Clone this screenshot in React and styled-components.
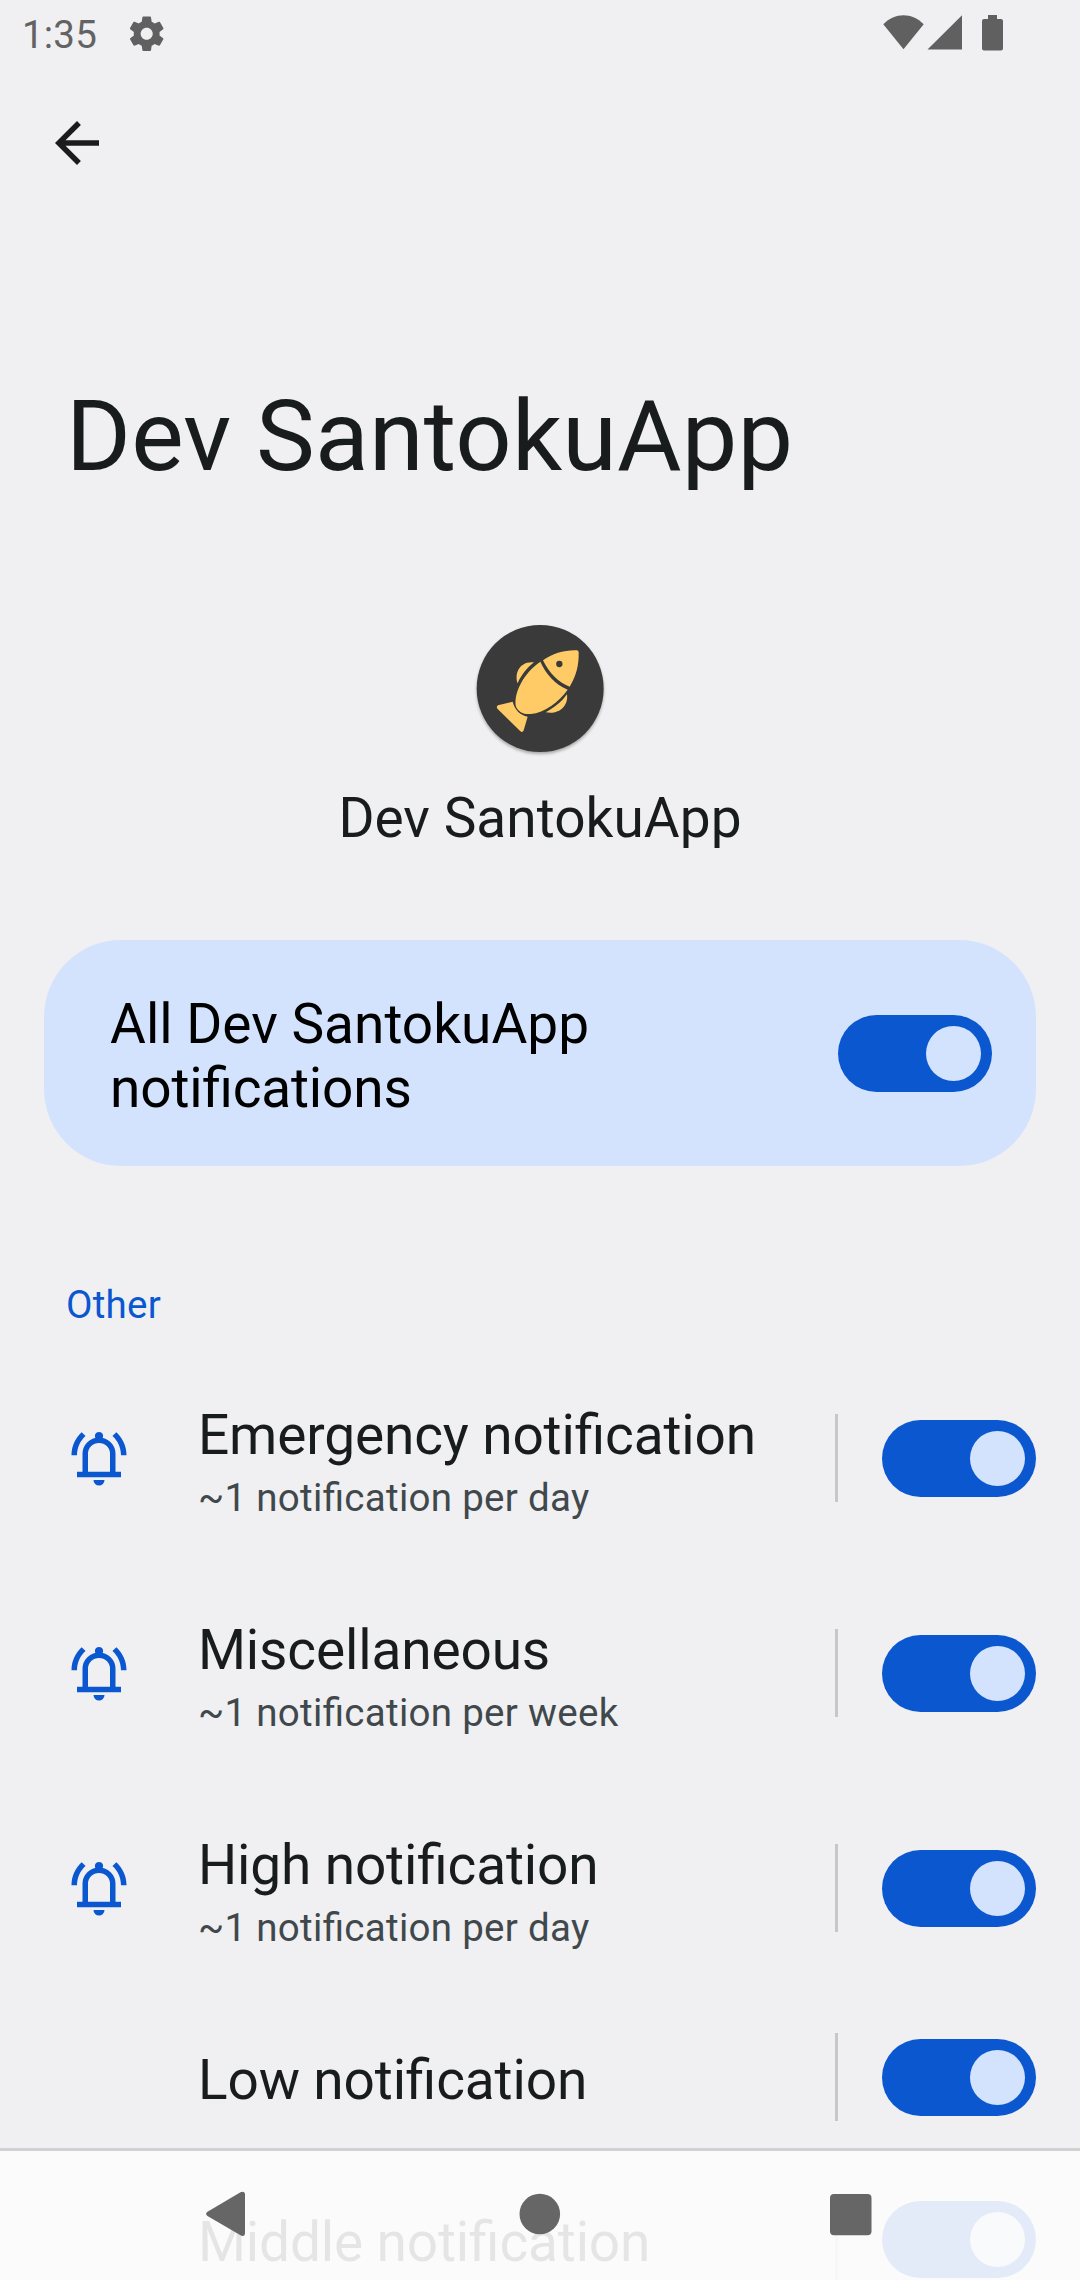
import React from "react";
import styled, { createGlobalStyle } from "styled-components";

const GlobalStyle = createGlobalStyle`
  * { box-sizing: border-box; }
  body {
    margin: 0;
    background: #f0f0f2;
    font-family: Roboto, "Noto Sans", sans-serif;
    font-feature-settings: "liga" 1;
    color: #191c1d;
  }
`;

const Screen = styled.div`
  position: relative;
  width: 1080px;
  height: 2280px;
  overflow: hidden;
  background: #f0f0f2;
  display: flex;
  flex-direction: column;
`;

const StatusBar = styled.header`
  display: flex;
  flex: none;
  align-items: center;
  justify-content: space-between;
  height: 66px;
  padding: 0 77px 0 22px;
  color: #606060;
`;

const StatusGroup = styled.div`
  display: flex;
  align-items: center;
`;

const Clock = styled.span`
  font-size: 38.5px;
  line-height: 46px;
  letter-spacing: 0.2px;
  color: #636363;
  width: 104px;
  padding-top: 3px;
`;

const Icon = styled.svg`
  display: block;
  flex: none;
  fill: currentColor;
  overflow: visible;
`;

const GearIcon = styled(Icon)`
  margin-top: 1px;
`;

const AppBar = styled.nav`
  flex: none;
  height: 154px;
  padding: 44px 44px 0;
`;

const BackButton = styled.button`
  display: block;
  border: 0;
  padding: 0;
  background: none;
  color: #1b1b1b;
`;

const PageTitle = styled.h1`
  flex: none;
  margin: 0;
  height: 405px;
  padding: 158px 66px 0;
  font-size: 99px;
  line-height: 116px;
  letter-spacing: 0.16px;
  font-weight: 400;
`;

const AppHeader = styled.section`
  flex: none;
  height: 315px;
  display: flex;
  flex-direction: column;
  align-items: center;
`;

const AppName = styled.div`
  margin-top: 33px;
  font-size: 55px;
  line-height: 64px;
  letter-spacing: 0.03px;
`;

const MainCard = styled.section`
  flex: none;
  display: flex;
  align-items: center;
  justify-content: space-between;
  height: 226px;
  margin: 0 44px;
  padding: 0 44px 0 66px;
  border-radius: 77px;
  background: #d3e3fd;
`;

const MainLabel = styled.div`
  width: 560px;
  padding-top: 6px;
  font-size: 55px;
  line-height: 64px;
  color: #000;
`;

const Tight = styled.span`
  letter-spacing: -0.18px;
`;

const SectionTitle = styled.h2`
  flex: none;
  margin: 0;
  height: 185px;
  padding: 116px 66px 0;
  font-size: 38.5px;
  line-height: 45px;
  letter-spacing: 0.25px;
  font-weight: 400;
  color: #0b57d0;
`;

const Row = styled.div`
  flex: none;
  display: flex;
  align-items: center;
  height: ${(p) => (p.$compact ? 162 : 215)}px;
  padding: ${(p) => (p.$compact ? 1 : 0)}px 44px 0 66px;
`;

const RowIcon = styled.div`
  width: 132px;
  margin-bottom: 1px;
  color: #0b57d0;
`;

const RowText = styled.div`
  flex: 1;
  padding-top: 5px;
`;

const RowTitle = styled.div`
  font-size: 55px;
  line-height: 64px;
  letter-spacing: -0.15px;
`;

const RowSummary = styled.div`
  margin-top: 8px;
  font-size: 38.5px;
  line-height: 45px;
  letter-spacing: 0.3px;
  color: #40484c;
`;

const Divider = styled.div`
  width: 3px;
  height: 88px;
  margin: 0 44px 1px 0;
  background: #c7c7c9;
`;

const Track = styled.div`
  flex: none;
  display: flex;
  justify-content: flex-end;
  width: 154px;
  height: 77px;
  padding: 11px;
  border-radius: 39px;
  background: #0b57d0;
`;

const Thumb = styled.div`
  width: 55px;
  height: 55px;
  border-radius: 50%;
  background: #d3e3fd;
`;

const NavBar = styled.footer`
  position: absolute;
  left: 0;
  right: 0;
  bottom: 0;
  height: 132px;
  border-top: 3px solid #d1d1d4;
  background: rgba(252, 252, 252, 0.9);
  background-clip: padding-box;
  color: #666;
  display: flex;
  justify-content: space-between;
  padding: 40px 208px 0 205px;
`;

function Switch() {
  return (
    <Track role="switch" aria-checked="true">
      <Thumb />
    </Track>
  );
}

function BellIcon() {
  return (
    <Icon width="66" height="66" viewBox="0 0 24 24">
      <circle cx="12" cy="4" r="1.5" />
      <path
        d="M7 18V10.5a5 5 0 0 1 10 0V18"
        fill="none"
        stroke="currentColor"
        strokeWidth="2"
      />
      <path d="M4 17h16v2H4zM10 20h4a2 2 0 0 1-4 0z" />
      <path d="M2 11h2c0-2.8 1.2-5.3 3.12-7L5.7 2.6C3.4 4.7 2 7.6 2 11zM22 11h-2c0-2.8-1.2-5.3-3.12-7L18.3 2.6C20.6 4.7 22 7.6 22 11z" />
    </Icon>
  );
}

const FishLogo = styled.svg`
  display: block;
  flex: none;
  overflow: visible;
  border-radius: 50%;
  filter: drop-shadow(0 2px 1.5px rgba(0, 0, 0, 0.3));
`;

function AppLogo() {
  return (
    <FishLogo width="128" height="128" viewBox="48 45 384 384">
      <circle cx="240.5" cy="235.5" r="190.5" fill="#3a3a3a" />
      <g fill="#ffcb66">
        <path d="M249 151C278 130 312 120 350 121Q356 121 356 127C357 166 348 200 329 230C295 217 267 189 249 151Z" />
        <path d="M241 155C258 193 286 223 323 239C297 276 254 308 212 312C190 314 175 305 168 290C160 250 190 190 241 155Z" />
        <path d="M222 157C200 175 184 194 173 220C162 188 181 152 222 157Z" />
        <path d="M321 253C306 274 282 294 257 307C295 315 326 290 321 253Z" />
        <path d="M158 275C164 299 180 315 203 320L191 361Q188 369 181 364L113 297C108 291 111 286 117 285Z" />
      </g>
      <circle cx="298" cy="162" r="9.5" fill="#3a3a3a" />
    </FishLogo>
  );
}

const channels = [
  { title: "Emergency notification", summary: "~1 notification per day" },
  { title: "Miscellaneous", summary: "~1 notification per week" },
  { title: "High notification", summary: "~1 notification per day" },
  { title: "Low notification" },
  { title: "Middle notification" },
];

function ChannelRow({ title, summary }) {
  return (
    <Row $compact={!summary}>
      <RowIcon>{summary && <BellIcon />}</RowIcon>
      <RowText>
        <RowTitle>{title}</RowTitle>
        {summary && <RowSummary>{summary}</RowSummary>}
      </RowText>
      <Divider />
      <Switch />
    </Row>
  );
}

export default function App() {
  return (
    <Screen>
      <GlobalStyle />
      <StatusBar>
        <StatusGroup>
          <Clock>1:35</Clock>
          <GearIcon width="41.4" height="41.4" viewBox="0 0 24 24">
            <path d="M19.43 12.98c.04-.32.07-.64.07-.98s-.03-.66-.07-.98l2.11-1.65c.19-.15.24-.42.12-.64l-2-3.46c-.12-.22-.39-.3-.61-.22l-2.49 1c-.52-.4-1.08-.73-1.69-.98l-.38-2.65C14.46 2.18 14.25 2 14 2h-4c-.25 0-.46.18-.49.42l-.38 2.65c-.61.25-1.17.59-1.69.98l-2.49-1c-.23-.09-.49 0-.61.22l-2 3.46c-.13.22-.07.49.12.64l2.11 1.65c-.04.32-.07.65-.07.98s.03.66.07.98l-2.11 1.65c-.19.15-.24.42-.12.64l2 3.46c.12.22.39.3.61.22l2.49-1c.52.4 1.08.73 1.69.98l.38 2.65c.03.24.24.42.49.42h4c.25 0 .46-.18.49-.42l.38-2.65c.61-.25 1.17-.59 1.69-.98l2.49 1c.23.09.49 0 .61-.22l2-3.46c.12-.22.07-.49-.12-.64l-2.11-1.65zM12 15.5c-1.93 0-3.5-1.57-3.5-3.5s1.57-3.5 3.5-3.5 3.5 1.57 3.5 3.5-1.57 3.5-3.5 3.5z" />
          </GearIcon>
        </StatusGroup>
        <StatusGroup>
          <Icon width="120" height="36" viewBox="0 0 120 36">
            <path d="M0.3 9.3C12-2.7 29-2.7 40.7 9.3L20.5 34.3Z" />
            <path d="M44.5 34.5L79 0.3V34.5Z" />
            <path d="M105 0h9v4h4q2 0 2 2v27.5q0 2-2 2h-17q-2 0-2-2V6q0-2 2-2h4z" />
          </Icon>
        </StatusGroup>
      </StatusBar>
      <AppBar>
        <BackButton aria-label="Navigate up">
          <Icon width="66" height="66" viewBox="0 0 24 24">
            <path d="M20 11H7.83l5.59-5.59L12 4l-8 8 8 8 1.41-1.41L7.83 13H20v-2z" />
          </Icon>
        </BackButton>
      </AppBar>
      <PageTitle>Dev SantokuApp</PageTitle>
      <AppHeader>
        <AppLogo />
        <AppName>Dev SantokuApp</AppName>
      </AppHeader>
      <MainCard>
        <MainLabel>
          All Dev SantokuApp <Tight>notifications</Tight>
        </MainLabel>
        <Switch />
      </MainCard>
      <SectionTitle>Other</SectionTitle>
      {channels.map((channel) => (
        <ChannelRow key={channel.title} {...channel} />
      ))}
      <NavBar>
        <Icon width="40" height="46" viewBox="0 0 40 46">
          <path d="M2.5 20.7L35.5 1.2Q39.8-0.3 40 3.5V42Q39.8 46.3 35.5 44.3L2.5 25Q-0.3 22.8 2.5 20.7Z" />
        </Icon>
        <Icon width="42" height="46" viewBox="0 0 42 46">
          <circle cx="22.8" cy="23" r="20.3" />
        </Icon>
        <Icon width="42" height="46" viewBox="0 0 42 46">
          <rect x="0" y="3" width="41.5" height="41.3" rx="4" />
        </Icon>
      </NavBar>
    </Screen>
  );
}
